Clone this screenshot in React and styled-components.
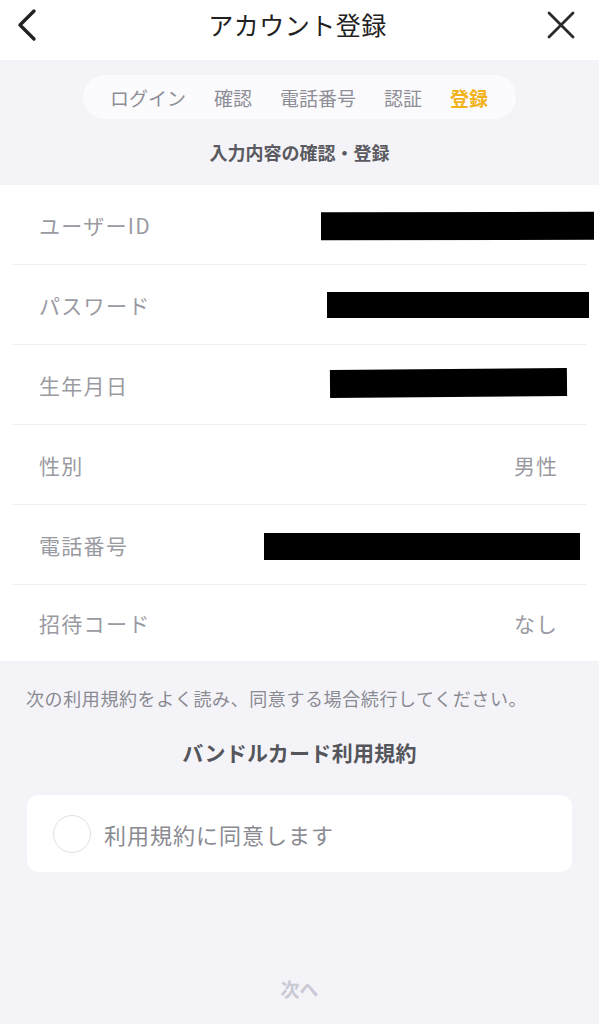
import React from 'react';
import styled, { createGlobalStyle } from 'styled-components';

const GlobalStyle = createGlobalStyle`
  body {
    margin: 0;
    background: #f4f4f8;
    font-family: "Noto Sans CJK JP", "Noto Sans", sans-serif;
  }
`;

const Page = styled.div`
  width: 599px;
  min-height: 1024px;
  background: #f4f4f8;
  display: flex;
  flex-direction: column;
`;

const Header = styled.div`
  height: 60px;
  background: #fff;
  display: flex;
  align-items: center;
  justify-content: space-between;
  padding: 0 22px 0 10px;
  box-sizing: border-box;
`;

const Title = styled.div`
  font-size: 25px;
  color: #222;
  margin-top: -12px;
  margin-left: 8px;
  letter-spacing: 0.5px;
`;

const IconButton = styled.div`
  width: 32px;
  height: 36px;
  display: flex;
  align-items: center;
  justify-content: center;
  margin-top: -10px;
`;

const StepArea = styled.div`
  display: flex;
  flex-direction: column;
  align-items: center;
  padding: 15px 0 0;
  height: 125px;
  box-sizing: border-box;
`;

const Steps = styled.div`
  display: flex;
  gap: 28px;
  height: 44px;
  align-items: center;
  padding: 0 28px 0 27px;
  background: #fbfbfd;
  border-radius: 22px;
`;

const Step = styled.span`
  font-size: 19px;
  color: ${p => (p.active ? '#f2b21b' : '#8e8e96')};
  font-weight: ${p => (p.active ? 700 : 400)};
`;

const SubTitle = styled.div`
  margin-top: 20px;
  font-size: 18px;
  font-weight: 700;
  color: #5a5a60;
`;

const List = styled.div`
  background: #fff;
  padding: 0 13px;
`;

const Row = styled.div`
  height: ${p => (p.last ? 76 : 80)}px;
  box-sizing: border-box;
  display: flex;
  align-items: center;
  justify-content: space-between;
  padding: 0 28px 0 26px;
  border-bottom: ${p => (p.last ? 'none' : '1px solid #efeff3')};
  position: relative;
`;

const Label = styled.span`
  font-size: 21px;
  color: #9a9aa2;
  letter-spacing: 1.3px;
`;

const Value = styled.span`
  font-size: 21px;
  color: #9a9aa2;
  letter-spacing: 1px;
`;

const Redact = styled.div`
  position: absolute;
  background: #000;
  transform: ${p => (p.tilt ? `rotate(${p.tilt}deg)` : 'none')};
`;

const Notice = styled.div`
  margin: 24px 0 0 26px;
  font-size: 18px;
  color: #8a8a92;
  letter-spacing: 0.6px;
`;

const TermsTitle = styled.div`
  text-align: center;
  margin-top: 26px;
  font-size: 21px;
  font-weight: 700;
  color: #55555c;
  letter-spacing: 0.3px;
`;

const AgreeCard = styled.div`
  margin: 28px 27px 0 27px;
  height: 77px;
  background: #fff;
  border-radius: 12px;
  display: flex;
  align-items: center;
  padding-left: 26px;
  gap: 13px;
`;

const Circle = styled.div`
  width: 38px;
  height: 38px;
  border-radius: 50%;
  border: 1.5px solid #e0e0e6;
  box-sizing: border-box;
`;

const AgreeText = styled.span`
  font-size: 22px;
  color: #8a8a92;
  letter-spacing: 1px;
`;

const Next = styled.div`
  margin-top: 103px;
  text-align: center;
  font-size: 19px;
  font-weight: 700;
  color: #c9c9d4;
`;

const rows = [
  { label: 'ユーザーID', redact: { left: 308, top: 27, width: 273, height: 28, tilt: -0.1 } },
  { label: 'パスワード', redact: { left: 314, top: 27, width: 262, height: 26 } },
  { label: '生年月日', redact: { left: 317, top: 24, width: 237, height: 28, tilt: -0.5 } },
  { label: '性別', value: '男性' },
  { label: '電話番号', redact: { left: 251, top: 28, width: 316, height: 27 } },
  { label: '招待コード', value: 'なし' },
];

const App = () => {
  return (
    <Page>
      <GlobalStyle />
      <Header>
        <IconButton>
          <svg width="22" height="34" viewBox="0 0 22 34">
            <path d="M19 3 L5 17 L19 31" fill="none" stroke="#222" strokeWidth="3.4" strokeLinecap="round" strokeLinejoin="round" />
          </svg>
        </IconButton>
        <Title>アカウント登録</Title>
        <IconButton>
          <svg width="30" height="30" viewBox="0 0 30 30">
            <path d="M3 3 L27 27 M27 3 L3 27" fill="none" stroke="#2a2a2a" strokeWidth="2.8" strokeLinecap="round" />
          </svg>
        </IconButton>
      </Header>
      <StepArea>
        <Steps>
          <Step>ログイン</Step>
          <Step>確認</Step>
          <Step>電話番号</Step>
          <Step>認証</Step>
          <Step active>登録</Step>
        </Steps>
        <SubTitle>入力内容の確認・登録</SubTitle>
      </StepArea>
      <List>
        {rows.map((r, i) => (
          <Row key={r.label} last={i === rows.length - 1}>
            <Label>{r.label}</Label>
            {r.value && <Value>{r.value}</Value>}
            {r.redact && (
              <Redact
                tilt={r.redact.tilt}
                style={{ left: r.redact.left, top: r.redact.top, width: r.redact.width, height: r.redact.height }}
              />
            )}
          </Row>
        ))}
      </List>
      <Notice>次の利用規約をよく読み、同意する場合続行してください。</Notice>
      <TermsTitle>バンドルカード利用規約</TermsTitle>
      <AgreeCard>
        <Circle />
        <AgreeText>利用規約に同意します</AgreeText>
      </AgreeCard>
      <Next>次へ</Next>
    </Page>
  );
};

export default App;
